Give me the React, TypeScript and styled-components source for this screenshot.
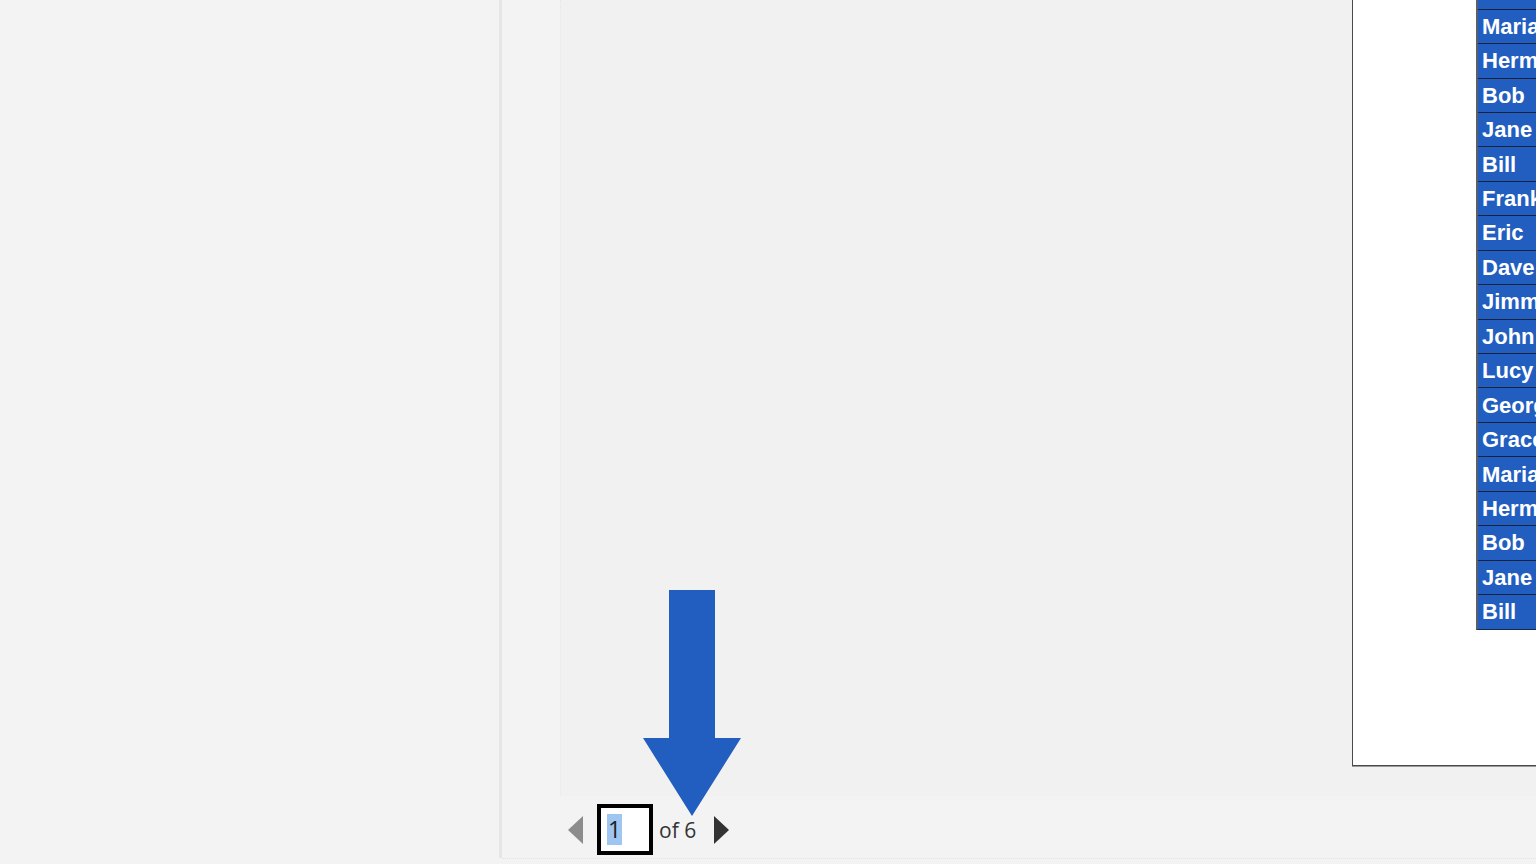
import * as React from 'react';
import styled, { createGlobalStyle } from 'styled-components';

const GlobalStyle = createGlobalStyle`
  html, body {
    margin: 0;
    padding: 0;
    background: #f3f3f3;
    overflow: hidden;
  }
`;

const names = [
  'Grace', 'Maria', 'Herman', 'Bob', 'Jane', 'Bill', 'Frank', 'Eric', 'Dave',
  'Jimmy', 'John', 'Lucy', 'George', 'Grace', 'Maria', 'Herman', 'Bob', 'Jane', 'Bill',
];

const Shell = styled.div`
  position: relative;
  display: flex;
  width: 1536px;
  height: 864px;
  background: #f3f3f3;
  overflow: hidden;
`;

const SidePane = styled.div`
  width: 499px;
  height: 858px;
  flex-shrink: 0;
  background: #f3f3f3;
`;

const Splitter = styled.div`
  width: 3px;
  height: 858px;
  flex-shrink: 0;
  background: #e6e6e6;
`;

const Main = styled.div`
  flex: 1;
  display: flex;
  flex-direction: column;
  min-width: 0;
  height: 858px;
  border-bottom: 1px dotted #e4e4e4;
`;

const ViewRow = styled.div`
  display: flex;
  height: 796px;
  flex-shrink: 0;
`;

const Gutter = styled.div`
  width: 58px;
  flex-shrink: 0;
  background: #f3f3f3;
`;

const Canvas = styled.div`
  flex: 1;
  display: flex;
  flex-direction: column;
  justify-content: flex-end;
  padding: 0 0 30px 791px;
  background: #f1f1f1;
  border-left: 1px dotted #e7e7e7;
  overflow: hidden;
`;

const Page = styled.div`
  width: 400px;
  height: 820px;
  flex-shrink: 0;
  background: #ffffff;
  border: 1px solid #4a4a4a;
  border-top: none;
  box-shadow: 0 1px 0 #9a9a9a;
  padding-left: 123px;
  overflow: hidden;
`;

const Table = styled.div`
  margin-top: 29.2px;
  width: 300px;
  border-left: 2px solid #5a5f6a;
  border-bottom: 1px solid #1c2a48;
`;

const Cell = styled.div`
  box-sizing: border-box;
  height: 34.45px;
  padding-left: 4px;
  padding-top: 1px;
  display: flex;
  align-items: center;
  background: #215ebf;
  border-top: 1px solid #17233d;
  color: #ffffff;
  font-family: 'Liberation Sans', Arial, sans-serif;
  font-weight: 700;
  font-size: 22px;
`;

const Pager = styled.div`
  display: flex;
  align-items: center;
  height: 51px;
  margin-top: 8px;
  padding-left: 66px;
  font-family: 'Open Sans', 'Noto Sans', sans-serif;
`;

const PageInput = styled.div`
  box-sizing: border-box;
  width: 56px;
  height: 51px;
  margin: 0 6px 0 14px;
  border: 4px solid #000000;
  background: #ffffff;
  display: flex;
  align-items: center;
  padding-left: 6px;
`;

const Selected = styled.span`
  background: #9fc6f0;
  color: #1e1e1e;
  font-size: 23px;
  line-height: 31px;
  padding: 0 1px;
`;

const OfLabel = styled.span`
  font-size: 21px;
  color: #333333;
  margin-right: 18px;
`;

const Callout = styled.svg`
  position: absolute;
  left: 643px;
  top: 590px;
`;

const Triangle: React.FC<{ dir: 'left' | 'right'; color: string }> = ({ dir, color }) => (
  <svg width="15" height="28" viewBox="0 0 15 28">
    {dir === 'left' ? (
      <polygon points="15,0 15,28 0,14" fill={color} />
    ) : (
      <polygon points="0,0 0,28 15,14" fill={color} />
    )}
  </svg>
);

export default function App() {
  return (
    <>
      <GlobalStyle />
      <Shell>
        <SidePane />
        <Splitter />
        <Main>
          <ViewRow>
            <Gutter />
            <Canvas>
              <Page>
                <Table>
                  {names.map((n, i) => (
                    <Cell key={i}>{n}</Cell>
                  ))}
                </Table>
              </Page>
            </Canvas>
          </ViewRow>
          <Pager>
            <Triangle dir="left" color="#8c8c8c" />
            <PageInput>
              <Selected>1</Selected>
            </PageInput>
            <OfLabel>of 6</OfLabel>
            <Triangle dir="right" color="#333333" />
          </Pager>
        </Main>
        <Callout width="98" height="226" viewBox="0 0 98 226">
          <polygon points="26,0 72,0 72,148 98,148 49,226 0,148 26,148" fill="#215ec0" />
        </Callout>
      </Shell>
    </>
  );
}
